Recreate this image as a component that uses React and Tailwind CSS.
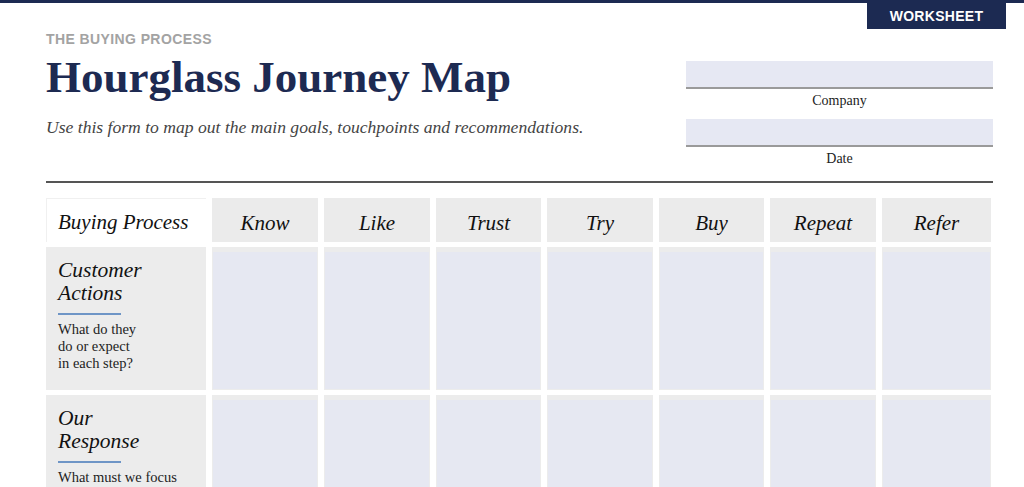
import React from "react";

const steps = ["Know", "Like", "Trust", "Try", "Buy", "Repeat", "Refer"];

const rows = [
  { title: ["Customer", "Actions"], note: ["What do they", "do or expect", "in each step?"] },
  { title: ["Our", "Response"], note: ["What must we focus", "on in each step?"] },
];

function Field({ label }) {
  return (
    <div className="flex flex-col">
      <div className="h-[28px] bg-[#e6e8f3] border-b-2 border-[#9a9a9a]" />
      <div className="pt-[2px] text-center text-[14px] text-[#222] leading-[20px] font-['Liberation_Serif',serif]">
        {label}
      </div>
    </div>
  );
}

export default function App() {
  return (
    <div className="w-[1024px] h-[487px] overflow-hidden bg-white relative border-t-[3px] border-[#1c2a52]">
      {/* ── BADGE ── */}
      <div className="absolute right-[18px] top-0 w-[139px] h-[26px] bg-[#1c2a52] flex items-center justify-center text-white text-[14px] font-bold tracking-[0.3px] font-['Liberation_Sans',sans-serif]">
        WORKSHEET
      </div>

      <div className="pl-[46px] pr-[31px]">
        {/* ── HEADER ── */}
        <div className="flex justify-between">
          <div className="pt-[27px]">
            <div className="text-[14px] font-bold text-[#a3a3a3] tracking-[0.4px] leading-[18px] font-['Liberation_Sans',sans-serif]">
              THE BUYING PROCESS
            </div>
            <h1 className="mt-[2px] text-[45px] leading-[54px] font-bold text-[#1d2a52] font-['Liberation_Serif',serif]">
              Hourglass Journey Map
            </h1>
            <p className="mt-[12px] text-[17.6px] italic text-[#444] leading-[22px] font-['Liberation_Serif',serif]">
              Use this form to map out the main goals, touchpoints and recommendations.
            </p>
          </div>
          <div className="w-[307px] pt-[58px] flex flex-col gap-[8px]">
            <Field label="Company" />
            <Field label="Date" />
          </div>
        </div>

        <div className="mt-[12px] h-[2px] bg-[#555]" />

        {/* ── GRID ── */}
        <div className="mt-[15px] grid grid-cols-[160px_106px_106px_105px_106px_105px_106px_109px] gap-x-[6px] gap-y-[5px] font-['Liberation_Serif',serif]">
          <div className="h-[44px] border border-[#f0f0f0] border-r-0 border-b-0 flex items-center pl-[11px] pt-[4px] text-[21px] italic text-[#111]">
            Buying Process
          </div>
          {steps.map((s) => (
            <div key={s} className="h-[44px] bg-[#ebebeb] flex items-center justify-center pt-[8px] text-[21px] italic text-[#111]">
              {s}
            </div>
          ))}

          {rows.map((r) => (
            <React.Fragment key={r.title.join(" ")}>
              <div className="h-[143px] bg-[#ececec] pl-[12px] pt-[12px]">
                <div className="text-[21.5px] italic leading-[23px] text-[#111]">
                  {r.title.map((t) => (
                    <div key={t}>{t}</div>
                  ))}
                </div>
                <div className="mt-[8px] w-[63px] h-[2px] bg-[#6e95c6]" />
                <div className="mt-[6px] text-[14.5px] leading-[17px] text-[#222]">
                  {r.note.map((t) => (
                    <div key={t}>{t}</div>
                  ))}
                </div>
              </div>
              {steps.map((s) => (
                <div key={s} className="h-[143px] bg-[#e6e8f2] border border-[#ececec] border-t-[5px]" />
              ))}
            </React.Fragment>
          ))}
        </div>
      </div>
    </div>
  );
}
